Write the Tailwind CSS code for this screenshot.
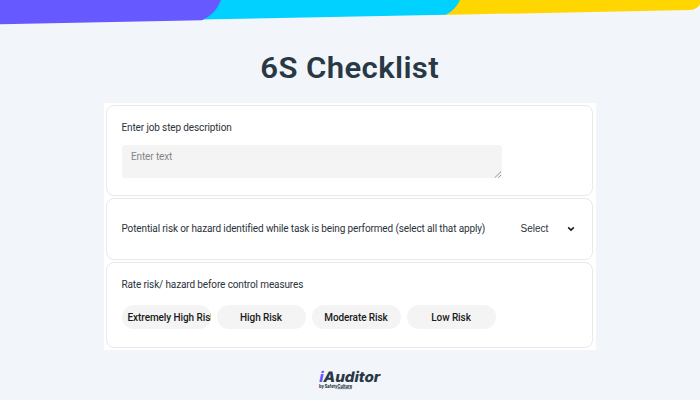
<!DOCTYPE html>
<html lang="en">

<head>
    <meta charset="UTF-8">
    <meta name="viewport" content="width=device-width, initial-scale=1.0">
    <script src="https://cdn.jsdelivr.net/npm/@tailwindcss/browser@4"></script>
    <title>6S Checklist</title>
</head>

<body class="bg-[#f2f6fb] font-[Roboto,sans-serif] text-[#2a323a] w-[700px] h-[400px] overflow-hidden flex flex-col items-center">
    <!-- Top ribbon -->
    <svg class="block w-[700px] h-[30px] shrink-0" viewBox="0 0 700 30">
        <path d="M440 0H700V4Q697 9.7 690 10L440 15Z" fill="#ffd600" />
        <path d="M200 0H460Q456 9.5 446 14.8L200 19.6Z" fill="#00d1ff" />
        <path d="M0 0H221C217 10 211 16 202 20.3L0 24.3Z" fill="#6559ff" />
    </svg>

    <h1 class="h-[73px] shrink-0 pt-[20px] text-[29.5px] leading-[36px] font-semibold tracking-[0.35px] scale-x-[1.055] text-[#293845] whitespace-nowrap">6S Checklist</h1>

    <main class="bg-white w-[492px] h-[247px] shrink-0 pl-[2px] pr-[3px] pt-[2px] flex flex-col gap-[2px] text-[10px] leading-[14px] tracking-[-0.125px]">
        <section class="h-[91px] shrink-0 border border-[#e9e9eb] rounded-lg px-[14.5px] pt-[15px]">
            <label for="step" class="block">Enter job step description</label>
            <div class="relative mt-[10px] w-[380px]">
                <textarea id="step" placeholder="Enter text" class="block w-full h-[33px] resize-none rounded-[3px] bg-[#f4f4f4] px-[9.5px] pt-[5px] leading-[14px] placeholder:text-[#858585]"></textarea>
                <svg class="absolute right-0 bottom-0 size-[8px]" viewBox="0 0 8 8" stroke="#666" stroke-width=".9" stroke-dasharray="1.2 .3">
                    <path d="M1 7.5L7 1.5M4.5 7.5L7 5" />
                </svg>
            </div>
        </section>

        <section class="h-[62px] shrink-0 border border-[#e9e9eb] rounded-lg px-[14.5px] flex items-center">
            <p class="w-[399px] whitespace-nowrap">Potential risk or hazard identified while task is being performed (select all that apply)</p>
            <button class="flex items-center text-[10px] tracking-normal whitespace-nowrap font-['Liberation_Sans',sans-serif]">
                <span class="w-[46px] text-left">Select</span>
                <svg class="w-[8px] h-[6px]" viewBox="0 0 8 6" fill="none" stroke="#17191c" stroke-width="1.5">
                    <path d="M1.2 1.4L4 4.1L6.8 1.4" />
                </svg>
            </button>
        </section>

        <section class="h-[86px] shrink-0 border border-[#e9e9eb] rounded-lg px-[14.5px] pt-[15px]">
            <p>Rate risk/ hazard before control measures</p>
            <div class="mt-[13px] flex gap-[6px] font-medium tracking-[-0.08px] text-[#191c20] whitespace-nowrap">
                <button class="w-[89px] h-[24px] pt-px shrink-0 rounded-full bg-[#f4f4f4] text-left">
                    <span class="block w-[89px] pl-[6px] overflow-hidden">Extremely High Risk</span>
                </button>
                <button class="w-[89px] h-[24px] pt-px shrink-0 rounded-full bg-[#f4f4f4]">High Risk</button>
                <button class="w-[89px] h-[24px] pt-px shrink-0 rounded-full bg-[#f4f4f4]">Moderate Risk</button>
                <button class="w-[89px] h-[24px] pt-px shrink-0 rounded-full bg-[#f4f4f4]">Low Risk</button>
            </div>
        </section>
    </main>

    <!-- Brand -->
    <svg class="mt-[18px] w-[66px] h-[24px] shrink-0 font-[Inter,sans-serif] font-extrabold" viewBox="317 368 66 24" fill="#293845">
        <text transform="translate(318.5 382) skewX(-11)" font-size="14.5" textLength="61" lengthAdjust="spacingAndGlyphs"><tspan fill="#6559ff">i</tspan>Auditor</text>
        <text x="319" y="387.5" font-size="4.3" textLength="33" lengthAdjust="spacingAndGlyphs">by SafetyCulture</text>
        <path d="M337.5 388.6H352" stroke="#293845" stroke-width=".6" />
    </svg>
</body>

</html>
